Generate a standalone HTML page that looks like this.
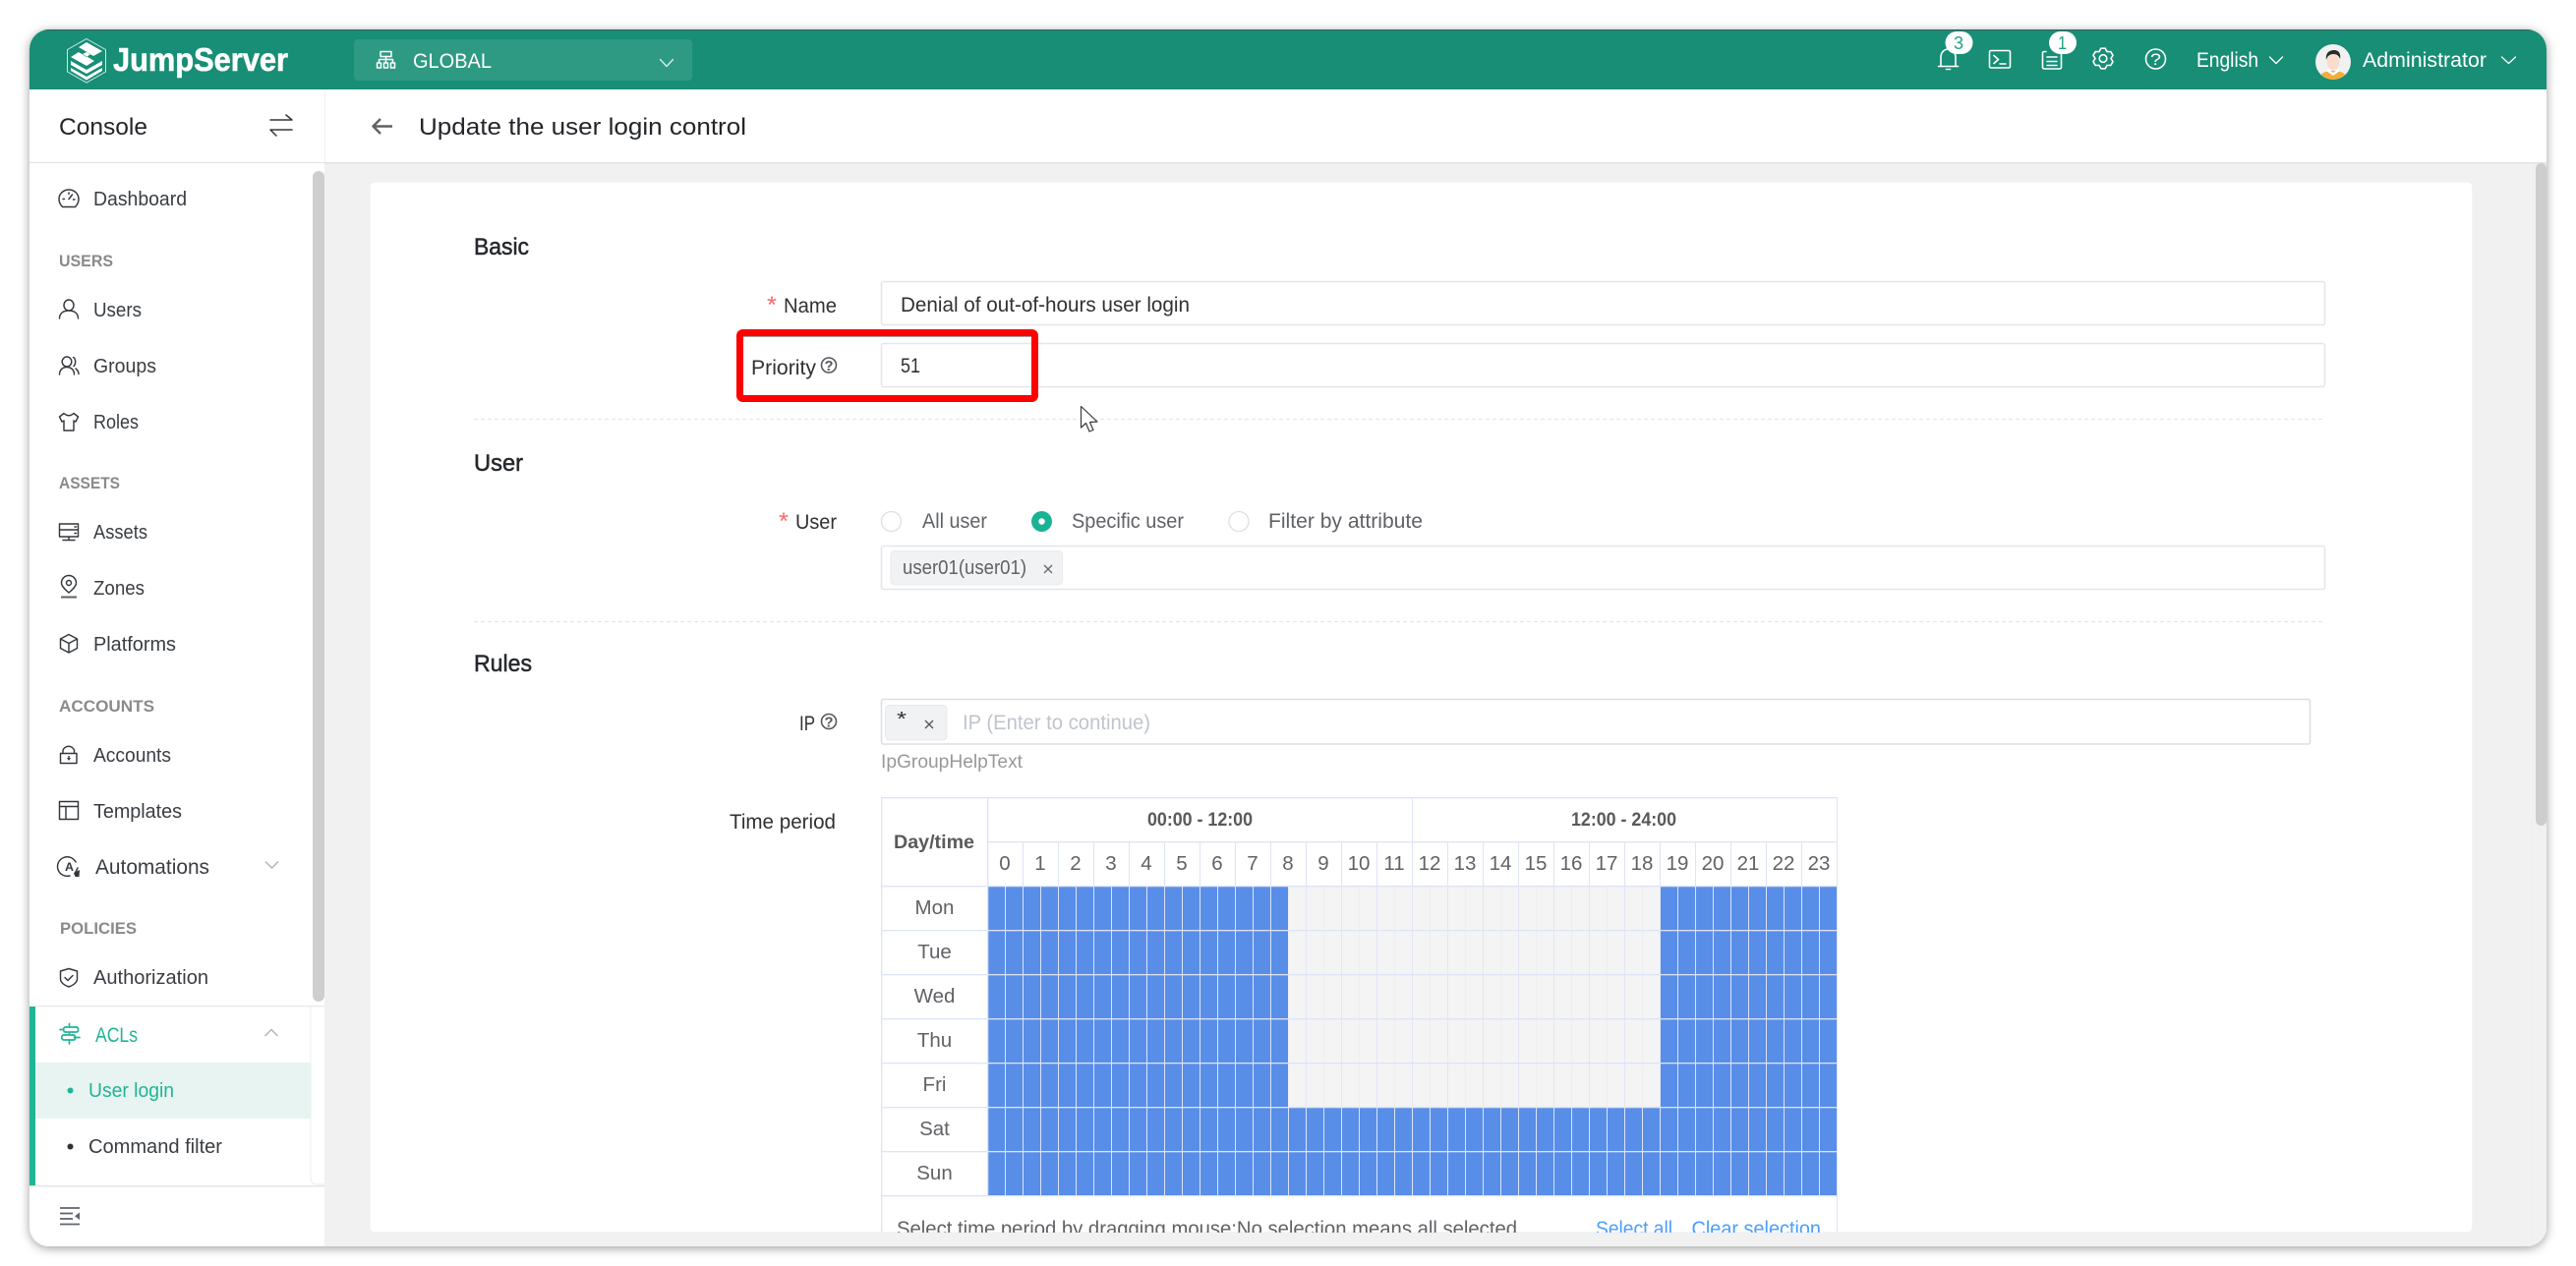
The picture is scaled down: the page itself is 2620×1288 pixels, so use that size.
<!DOCTYPE html>
<html lang="en"><head><meta charset="utf-8"><title>Update the user login control</title>
<style>
html,body{margin:0;padding:0;background:#fff;width:2620px;height:1288px;overflow:hidden}
svg{display:block}
text{font-family:"Liberation Sans",Arial,sans-serif;font-size:20px;fill:#303133;white-space:pre}
.s{fill:#3a3d42;font-size:20.5px}
.sec{font-size:16.5px;font-weight:700;fill:#8a8a8a}
.lb{font-size:21.5px;fill:#303133}
.h{font-size:24.5px;fill:#262a2e;stroke:#262a2e;stroke-width:.55}
.w{font-size:21.5px;fill:#fff}
.g{font-size:20px;fill:#606266}
.tb{font-size:20.5px;fill:#606266}
.bd{font-size:19px;font-weight:700;fill:#5a5a5a}
.i{fill:none;stroke:#34373c;stroke-width:1.45;stroke-linecap:round;stroke-linejoin:round}
.wi{fill:none;stroke:#fff;stroke-width:1.6;stroke-linecap:round;stroke-linejoin:round}
.gr{fill:none;stroke:#1fb595;stroke-width:1.7;stroke-linecap:round;stroke-linejoin:round}
.q{fill:none;stroke:#55585d;stroke-width:1.6}
.inp{fill:#fff;stroke:#e4e6ea;stroke-width:1.5}
</style></head><body>
<svg xmlns="http://www.w3.org/2000/svg" width="2620" height="1288" viewBox="0 0 2620 1288">
<defs>
<clipPath id="win"><rect x="30" y="30" width="2560" height="1238" rx="20"/></clipPath>
<clipPath id="card"><rect x="376" y="185" width="2139" height="1069"/></clipPath>
<clipPath id="av"><circle cx="2373" cy="63" r="18"/></clipPath>
<filter id="sh" x="-5%" y="-5%" width="110%" height="110%"><feDropShadow dx="0" dy="2" stdDeviation="5" flood-color="#000" flood-opacity=".38"/></filter>
<pattern id="vb" patternUnits="userSpaceOnUse" x="1004" y="0" width="18" height="10"><rect width="18" height="10" fill="#598ee8"/><rect width="1" height="10" fill="#dbe4f8"/></pattern>
<pattern id="vg" patternUnits="userSpaceOnUse" x="1004" y="0" width="36" height="10"><rect width="36" height="10" fill="#f4f4f4"/><rect width="1" height="10" fill="#e2e6f6"/><rect x="18" width="1" height="10" fill="#eceef4"/></pattern>
</defs>

<rect x="30" y="30" width="2560" height="1238" rx="20" fill="#f1f1f1" filter="url(#sh)"/>
<g clip-path="url(#win)">
<rect x="30" y="30" width="2560" height="1238" fill="#f1f1f1"/>
<!-- header -->
<rect x="30" y="30" width="2560" height="61" fill="#178e75"/>
<rect x="30" y="30" width="2560" height="1" fill="#3d5a54"/>
<!-- sub header -->
<rect x="30" y="91" width="2560" height="74" fill="#fff"/>
<rect x="30" y="165" width="2560" height="1.5" fill="#e2e2e2"/>
<!-- sidebar -->
<rect x="30" y="166" width="300" height="1102" fill="#fff"/>
<rect x="330" y="91" width="1" height="74" fill="#f1f1f1"/>
<rect x="318" y="174" width="12" height="845" rx="6" fill="#cecece"/>
<path d="M316 1024V1198q0 7 7 7h7" fill="none" stroke="#efefef" stroke-width="1.2"/>
<rect x="36" y="1023" width="294" height="1.2" fill="#e8e8e8"/>
<rect x="30" y="1024" width="6" height="182" fill="#1fb595"/>
<rect x="36" y="1081" width="280" height="57" fill="#e8f4f1"/>
<rect x="30" y="1206" width="300" height="1.4" fill="#e3e3e3"/>
<!-- main scrollbar -->
<rect x="2576" y="166" width="1" height="1102" fill="#eee"/>
<rect x="2579" y="166" width="11" height="674" rx="5.5" fill="#cdcdcd"/>
<!-- card -->
<rect x="376" y="185" width="2139" height="1069" rx="5" fill="#fff" stroke="#eceef5" stroke-width="1"/>
</g>

<!-- Logo -->
<polygon points="88,39.5 107.5,50.5 107.5,73 88,84 68.5,73 68.5,50.5" fill="none" stroke="#cfe9e2" stroke-width="1"/>
<path d="M88 43L104 52 95 57 88 53 84 55 96 62 88 67 72 58 80 53 88 58 92 55 80 48Z" fill="#fff"/>
<path d="M72 62L88 71 104 62V66L88 75 72 66Z" fill="#fff"/>
<path d="M72 69L88 78 104 69V72L88 81.5 72 72Z" fill="#fff"/>
<text x="115" y="72" style="font-size:33px;font-weight:700;fill:#fff;stroke:#fff;stroke-width:.6" textLength="178" lengthAdjust="spacingAndGlyphs">JumpServer</text>

<!-- org select -->
<rect x="360" y="40" width="344" height="42" rx="4" fill="#2e9a83"/>
<g class="wi" style="stroke-width:1.5">
<rect x="387" y="52.500" width="11" height="5"/><path d="M392.500 57.500V63M385.500 63V60.500H399.500V63"/>
<rect x="383.500" y="64" width="4" height="5"/><rect x="390.500" y="64" width="4" height="5"/><rect x="397.500" y="64" width="4" height="5"/>
</g>
<text class="w" x="420" y="69" textLength="80" lengthAdjust="spacingAndGlyphs">GLOBAL</text>
<path class="wi" d="M671.500 60.500L678 67.500 684.500 60.500" style="stroke-width:1.3;stroke:#d9efe9"/>

<!-- header right -->
<g class="wi">
<path d="M1974 67.500V58a7.500 8 0 0 1 15 0V67.500M1971.500 67.500H1991.500"/><path d="M1979.500 70.500H1983.500"/>
<rect x="2023.500" y="51.500" width="21" height="17.500" rx="1.500"/><path d="M2028 56.500L2032.500 60.500 2028 64.500M2034 65H2040"/>
<path d="M2081 52.500H2079a1.500 1.500 0 0 0-1.500 1.500V68.500a1.500 1.500 0 0 0 1.500 1.500H2095a1.500 1.500 0 0 0 1.500-1.500V54M2082 58H2092M2082 62.500H2092M2082 66.500H2092"/>
<path transform="translate(2139 59.500)" d="M-2.200-10.300H2.200L4-6.900 7.800-7 10-3.200 8 0 10 3.200 7.800 7 4 6.900 2.200 10.300H-2.200L-4 6.900-7.800 7-10 3.200-8 0-10-3.200-7.800-7-4-6.900Z"/>
<circle cx="2139" cy="59.500" r="3.800"/>
<circle cx="2192.500" cy="60" r="10"/>
</g>
<text x="2187" y="66" style="font-size:17px;fill:#fff" textLength="11" lengthAdjust="spacingAndGlyphs">?</text>
<rect x="1978.500" y="32" width="28" height="23" rx="11.500" fill="#fff"/>
<text x="1987" y="50" style="font-size:18px;fill:#1fa288" textLength="10" lengthAdjust="spacingAndGlyphs">3</text>
<rect x="2084" y="32" width="28" height="23" rx="11.500" fill="#fff"/>
<text x="2093" y="50" style="font-size:18px;fill:#1fa288" textLength="9" lengthAdjust="spacingAndGlyphs">1</text>
<text class="w" x="2234" y="68" textLength="63" lengthAdjust="spacingAndGlyphs">English</text>
<path class="wi" d="M2308.500 58L2315 64.500 2321.500 58" style="stroke-width:1.3"/>
<circle cx="2373" cy="63" r="18" fill="#f1f1f1"/>
<g clip-path="url(#av)">
<path d="M2358 82c1-8 8-10 15-10s14 2 15 10Z" fill="#f0ad3c"/>
<path d="M2368 70l5 4 5-4 2 2-7 5-7-5Z" fill="#fff"/>
<ellipse cx="2373" cy="63" rx="6" ry="8" fill="#fbdccb"/>
<path d="M2366 61c-1-7 3-10 8-10s7 4 6 9c-1-3-3-5-7-5-3 0-6 2-7 6Z" fill="#2b2b2b"/>
</g>
<text class="w" x="2403" y="68" textLength="126" lengthAdjust="spacingAndGlyphs">Administrator</text>
<path class="wi" d="M2544.500 58L2551.500 64.500 2558.500 58" style="stroke-width:1.3"/>

<!-- subheader -->
<text x="60" y="137" style="font-size:24.500px;fill:#23262a" textLength="90" lengthAdjust="spacingAndGlyphs">Console</text>
<path class="i" d="M275 122H297L291 117M297 132H275L281 138" style="stroke-width:1.500"/>
<path d="M399 128.500H380M387 121L379.500 128.500 387 136" fill="none" stroke="#5f6266" stroke-width="2.400" stroke-linejoin="round"/>
<text x="426" y="137" style="font-size:24.500px;fill:#23262a" textLength="333" lengthAdjust="spacingAndGlyphs">Update the user login control</text>

<!-- sidebar icons -->
<path class="i" d="M63.500 210.500H76.500C79 208 80 205.500 80 202.500A10 9.500 0 0 0 60 202.500C60 205.500 61 208 63.500 210.500ZM70 202.500L73.500 198M64 202.500H65.500M70 196V197.500M74.500 203H76"/>
<ellipse class="i" cx="70" cy="310.500" rx="5" ry="5.500"/><path class="i" d="M60.500 324C60.500 319 64 316 70 316S79.500 319 79.500 324"/>
<ellipse class="i" cx="68" cy="368" rx="4.800" ry="5"/><path class="i" d="M60.500 381C60.500 376.500 63.500 373.500 68 373.500S75.500 376.500 75.500 381M74.500 363.500C77 364.500 77.500 370 75 372.500M77 375C79 376.500 80 378.500 80 380.500"/>
<path class="i" d="M65 420.500L60.500 424 63 429 65 428V438H75V428L77 429 79.500 424 75 420.500Q70 425 65 420.500Z"/>
<path class="i" d="M60.500 533H79.500V546H60.500ZM60.500 539H79.500M70 546V549.500M64 549.500H76M76 536H77.500M76 542.500H77.500"/>
<path class="i" d="M70 603C66.500 600 62.500 596.500 62.500 593A7.500 7.500 0 0 1 77.500 593C77.500 596.500 73.500 600 70 603Z"/><circle class="i" cx="70" cy="593" r="2.500"/><path d="M62 607.500H78" stroke="#5f6266" stroke-width="2"/>
<path class="i" d="M70 645.500L78.500 650V659.500L70 664 61.500 659.500V650ZM61.500 650L70 654.500 78.500 650M70 654.500V664"/>
<path class="i" d="M61.500 766.500H78V776.500H61.500ZM64 766.500V763.500A6 6 0 0 1 75.500 763.500V766.500M61.500 763.500"/><path d="M68 771H72L70 774Z M69.300 769H70.700V771H69.300Z" fill="#34373c"/>
<path class="i" d="M60.500 815.500H79.500V833.500H60.500ZM60.500 820.500H79.500M67 820.500V833.500"/>
<path class="i" d="M77 877A9.800 9.800 0 1 0 71 891M79 883L76 889"/>
<text x="66" y="886" style="font-size:12px;font-weight:700;fill:#34373c" textLength="9" lengthAdjust="spacingAndGlyphs">A</text>
<path d="M75 888L81 885 80.500 892 76.500 892Z" fill="#34373c"/>
<path class="i" d="M70 985.500L78.500 988V996C78.500 999.500 74.500 1002.500 70 1004 65.500 1002.500 61.500 999.500 61.500 996V988ZM66 994.500L69 997.500 74 992.500"/>
<path class="gr" d="M70.500 1041.500V1045M70.500 1050V1053M70.500 1058V1062M66.500 1045H78C80 1045 80 1050 78 1050H66.500C64 1050 64 1045 66.500 1045ZM61 1047.500H64.500M65 1053H75C77 1053 77 1058 75 1058H65C62 1058 62 1053 65 1053ZM75.500 1055.500H81"/>
<path d="M61 1229H81M61 1234.500H74M61 1240H74M61 1245.500H81" stroke="#5f6470" stroke-width="1.800"/><path d="M81 1233.500V1241L76 1237.200Z" fill="#5f6470"/>

<!-- sidebar text -->
<text class="s" x="95" y="209" textLength="95" lengthAdjust="spacingAndGlyphs">Dashboard</text>
<text class="sec" x="60" y="271" textLength="55" lengthAdjust="spacingAndGlyphs">USERS</text>
<text class="s" x="95" y="322" textLength="49" lengthAdjust="spacingAndGlyphs">Users</text>
<text class="s" x="95" y="379" textLength="64" lengthAdjust="spacingAndGlyphs">Groups</text>
<text class="s" x="95" y="436" textLength="46" lengthAdjust="spacingAndGlyphs">Roles</text>
<text class="sec" x="60" y="497" textLength="62" lengthAdjust="spacingAndGlyphs">ASSETS</text>
<text class="s" x="95" y="548" textLength="55" lengthAdjust="spacingAndGlyphs">Assets</text>
<text class="s" x="95" y="605" textLength="52" lengthAdjust="spacingAndGlyphs">Zones</text>
<text class="s" x="95" y="662" textLength="84" lengthAdjust="spacingAndGlyphs">Platforms</text>
<text class="sec" x="60" y="724" textLength="97" lengthAdjust="spacingAndGlyphs">ACCOUNTS</text>
<text class="s" x="95" y="775" textLength="79" lengthAdjust="spacingAndGlyphs">Accounts</text>
<text class="s" x="95" y="832" textLength="90" lengthAdjust="spacingAndGlyphs">Templates</text>
<text class="s" x="97" y="889" style="font-size:21px" textLength="116" lengthAdjust="spacingAndGlyphs">Automations</text>
<path d="M270 876.500L276.500 883 283 876.500" fill="none" stroke="#aeb1b6" stroke-width="1.400"/>
<text class="sec" x="61" y="950" textLength="78" lengthAdjust="spacingAndGlyphs">POLICIES</text>
<text class="s" x="95" y="1001" textLength="117" lengthAdjust="spacingAndGlyphs">Authorization</text>
<text x="97" y="1060" style="font-size:21px;fill:#1fb595" textLength="43" lengthAdjust="spacingAndGlyphs">ACLs</text>
<path d="M269.500 1054L276 1047.500 282.500 1054" fill="none" stroke="#aeb1b6" stroke-width="1.400"/>
<circle cx="71.500" cy="1109.500" r="3" fill="#1fb595"/>
<text x="90" y="1116" style="font-size:20.500px;fill:#1fb595" textLength="87" lengthAdjust="spacingAndGlyphs">User login</text>
<circle cx="71.500" cy="1166.500" r="3" fill="#303133"/>
<text class="s" x="90" y="1173" textLength="136" lengthAdjust="spacingAndGlyphs">Command filter</text>

<!-- form -->
<g clip-path="url(#card)">
<text class="h" x="482" y="259" textLength="56" lengthAdjust="spacingAndGlyphs">Basic</text>
<text x="780" y="318" style="font-size:24px;fill:#f56c6c" textLength="10" lengthAdjust="spacingAndGlyphs">*</text>
<text class="lb" x="797" y="318" textLength="54" lengthAdjust="spacingAndGlyphs">Name</text>
<rect class="inp" x="896.500" y="286.500" width="1468" height="44" rx="2"/>
<text class="lb" x="916" y="317" textLength="294" lengthAdjust="spacingAndGlyphs">Denial of out-of-hours user login</text>

<text class="lb" x="764" y="381" textLength="66" lengthAdjust="spacingAndGlyphs">Priority</text>
<circle class="q" cx="843" cy="371.500" r="7.500"/>
<text x="838.500" y="377" style="font-size:15px;fill:#55585d;font-weight:700" textLength="9" lengthAdjust="spacingAndGlyphs">?</text>
<rect class="inp" x="896.500" y="349.500" width="1468" height="44" rx="2"/>
<text x="916" y="379" style="font-size:21.500px" textLength="20" lengthAdjust="spacingAndGlyphs">51</text>

<path d="M482 426.500H2365" stroke="#e6e6e6" stroke-width="1.200" stroke-dasharray="4 3"/>
<text class="h" x="482" y="479" textLength="50" lengthAdjust="spacingAndGlyphs">User</text>
<text x="792" y="538" style="font-size:24px;fill:#f56c6c" textLength="10" lengthAdjust="spacingAndGlyphs">*</text>
<text class="lb" x="809" y="538" textLength="42" lengthAdjust="spacingAndGlyphs">User</text>
<circle cx="906.500" cy="530.500" r="10" fill="#fff" stroke="#dcdfe6" stroke-width="1.300"/>
<text class="g" x="938" y="537" style="font-size:21px" textLength="66" lengthAdjust="spacingAndGlyphs">All user</text>
<circle cx="1059.500" cy="530.500" r="10.500" fill="#1ab394"/><circle cx="1059.500" cy="530.500" r="3.200" fill="#fff"/>
<text class="g" x="1090" y="537" style="font-size:21px" textLength="114" lengthAdjust="spacingAndGlyphs">Specific user</text>
<circle cx="1260" cy="530.500" r="10" fill="#fff" stroke="#dcdfe6" stroke-width="1.300"/>
<text class="g" x="1290" y="537" style="font-size:21px" textLength="157" lengthAdjust="spacingAndGlyphs">Filter by attribute</text>
<rect class="inp" x="896.500" y="555.500" width="1468" height="44" rx="2"/>
<rect x="906" y="560.500" width="174.500" height="34.500" rx="4" fill="#f1f2f4" stroke="#e9e9eb"/>
<text class="tb" x="918" y="584" textLength="126" lengthAdjust="spacingAndGlyphs">user01(user01)</text>
<path d="M1062 575L1070 583M1070 575L1062 583" stroke="#666" stroke-width="1.300"/>

<path d="M482 632.500H2365" stroke="#e6e6e6" stroke-width="1.200" stroke-dasharray="4 3"/>
<text class="h" x="482" y="683" textLength="59" lengthAdjust="spacingAndGlyphs">Rules</text>
<text class="lb" x="813" y="743" textLength="16" lengthAdjust="spacingAndGlyphs">IP</text>
<circle class="q" cx="843" cy="734" r="7.500"/>
<text x="838.500" y="739.500" style="font-size:15px;fill:#55585d;font-weight:700" textLength="9" lengthAdjust="spacingAndGlyphs">?</text>
<rect x="896.500" y="711.500" width="1453" height="45.500" rx="2" fill="#fff" stroke="#dcdee3" stroke-width="1.500"/>
<rect x="900.500" y="717.500" width="62.500" height="35.500" rx="4" fill="#f1f2f4" stroke="#e9e9eb"/>
<text x="912" y="738" style="font-size:20px;fill:#303133" textLength="10" lengthAdjust="spacingAndGlyphs">*</text>
<path d="M941 733L949 741M949 733L941 741" stroke="#555" stroke-width="1.300"/>
<text x="979" y="742" style="font-size:21px;fill:#c0c4cc" textLength="191" lengthAdjust="spacingAndGlyphs">IP (Enter to continue)</text>
<text x="896" y="781" style="font-size:19.500px;fill:#999" textLength="144" lengthAdjust="spacingAndGlyphs">IpGroupHelpText</text>
<text class="lb" x="742" y="843" textLength="108" lengthAdjust="spacingAndGlyphs">Time period</text>

<!-- table -->
<rect x="1004" y="901" width="864" height="315" fill="url(#vb)"/>
<rect x="1310" y="901" width="379" height="225" fill="#f4f4f4"/>
<rect x="1310" y="901" width="379" height="225" fill="url(#vg)"/>
<rect x="1868" y="811" width="1" height="443" fill="#dee3f7"/>
<rect x="896" y="811" width="1.300" height="443" fill="#dee3f7"/>
<rect x="1004" y="811" width="1.300" height="405" fill="#dee3f7"/>
<rect x="896" y="811" width="973" height="1.300" fill="#dee3f7"/>
<rect x="1004" y="856" width="865" height="1.300" fill="#dee3f7"/>
<rect x="896" y="901" width="973" height="1.300" fill="#dee3f7"/>
<g fill="#dee3f7">
<rect x="896" y="946" width="973" height="1.300"/><rect x="896" y="991" width="973" height="1.300"/><rect x="896" y="1036" width="973" height="1.300"/><rect x="896" y="1081" width="973" height="1.300"/><rect x="896" y="1126" width="973" height="1.300"/><rect x="896" y="1171" width="973" height="1.300"/><rect x="896" y="1216" width="973" height="1.300"/>
<rect x="1436" y="811" width="1" height="45"/>
<rect x="1040" y="856" width="1" height="45"/><rect x="1076" y="856" width="1" height="45"/><rect x="1112" y="856" width="1" height="45"/><rect x="1148" y="856" width="1" height="45"/><rect x="1184" y="856" width="1" height="45"/><rect x="1220" y="856" width="1" height="45"/><rect x="1256" y="856" width="1" height="45"/><rect x="1292" y="856" width="1" height="45"/><rect x="1328" y="856" width="1" height="45"/><rect x="1364" y="856" width="1" height="45"/><rect x="1400" y="856" width="1" height="45"/><rect x="1436" y="856" width="1" height="45"/><rect x="1472" y="856" width="1" height="45"/><rect x="1508" y="856" width="1" height="45"/><rect x="1544" y="856" width="1" height="45"/><rect x="1580" y="856" width="1" height="45"/><rect x="1616" y="856" width="1" height="45"/><rect x="1652" y="856" width="1" height="45"/><rect x="1688" y="856" width="1" height="45"/><rect x="1724" y="856" width="1" height="45"/><rect x="1760" y="856" width="1" height="45"/><rect x="1796" y="856" width="1" height="45"/><rect x="1832" y="856" width="1" height="45"/>
</g>
<text class="bd" x="1167" y="840" textLength="107" lengthAdjust="spacingAndGlyphs">00:00 - 12:00</text>
<text class="bd" x="1598" y="840" textLength="107" lengthAdjust="spacingAndGlyphs">12:00 - 24:00</text>
<text class="bd" x="909" y="863" textLength="82" lengthAdjust="spacingAndGlyphs">Day/time</text>
<g>
<text class="tb" text-anchor="middle" x="1022" y="885">0</text><text class="tb" text-anchor="middle" x="1058" y="885">1</text><text class="tb" text-anchor="middle" x="1094" y="885">2</text><text class="tb" text-anchor="middle" x="1130" y="885">3</text><text class="tb" text-anchor="middle" x="1166" y="885">4</text><text class="tb" text-anchor="middle" x="1202" y="885">5</text><text class="tb" text-anchor="middle" x="1238" y="885">6</text><text class="tb" text-anchor="middle" x="1274" y="885">7</text><text class="tb" text-anchor="middle" x="1310" y="885">8</text><text class="tb" text-anchor="middle" x="1346" y="885">9</text><text class="tb" text-anchor="middle" x="1382" y="885">10</text><text class="tb" text-anchor="middle" x="1418" y="885">11</text><text class="tb" text-anchor="middle" x="1454" y="885">12</text><text class="tb" text-anchor="middle" x="1490" y="885">13</text><text class="tb" text-anchor="middle" x="1526" y="885">14</text><text class="tb" text-anchor="middle" x="1562" y="885">15</text><text class="tb" text-anchor="middle" x="1598" y="885">16</text><text class="tb" text-anchor="middle" x="1634" y="885">17</text><text class="tb" text-anchor="middle" x="1670" y="885">18</text><text class="tb" text-anchor="middle" x="1706" y="885">19</text><text class="tb" text-anchor="middle" x="1742" y="885">20</text><text class="tb" text-anchor="middle" x="1778" y="885">21</text><text class="tb" text-anchor="middle" x="1814" y="885">22</text><text class="tb" text-anchor="middle" x="1850" y="885">23</text>
</g>
<text class="tb" text-anchor="middle" x="950.500" y="930">Mon</text>
<text class="tb" text-anchor="middle" x="950.500" y="975">Tue</text>
<text class="tb" text-anchor="middle" x="950.500" y="1020">Wed</text>
<text class="tb" text-anchor="middle" x="950.500" y="1065">Thu</text>
<text class="tb" text-anchor="middle" x="950.500" y="1110">Fri</text>
<text class="tb" text-anchor="middle" x="950.500" y="1155">Sat</text>
<text class="tb" text-anchor="middle" x="950.500" y="1200">Sun</text>
<text x="912" y="1257" style="font-size:21px;fill:#606266" textLength="631" lengthAdjust="spacingAndGlyphs">Select time period by dragging mouse;No selection means all selected</text>
<text x="1623" y="1257" style="font-size:21px;fill:#4a9ffb" textLength="78" lengthAdjust="spacingAndGlyphs">Select all</text>
<text x="1720.500" y="1257" style="font-size:21px;fill:#4a9ffb" textLength="131.500" lengthAdjust="spacingAndGlyphs">Clear selection</text>
</g>

<!-- red highlight -->
<rect x="752.500" y="338.500" width="300" height="67" rx="3" fill="none" stroke="#ff0000" stroke-width="7"/>
<rect x="756" y="342" width="293" height="1" fill="#7a7a7a" opacity=".7"/>
<!-- cursor -->
<path d="M1099.500 413.500V435L1104.500 430.500 1108 439 1112 437.500 1108.500 429.500 1116 429Z" fill="#fff" stroke="#3a3a3a" stroke-width="1.200" stroke-linejoin="round"/>
</svg>
</body></html>
